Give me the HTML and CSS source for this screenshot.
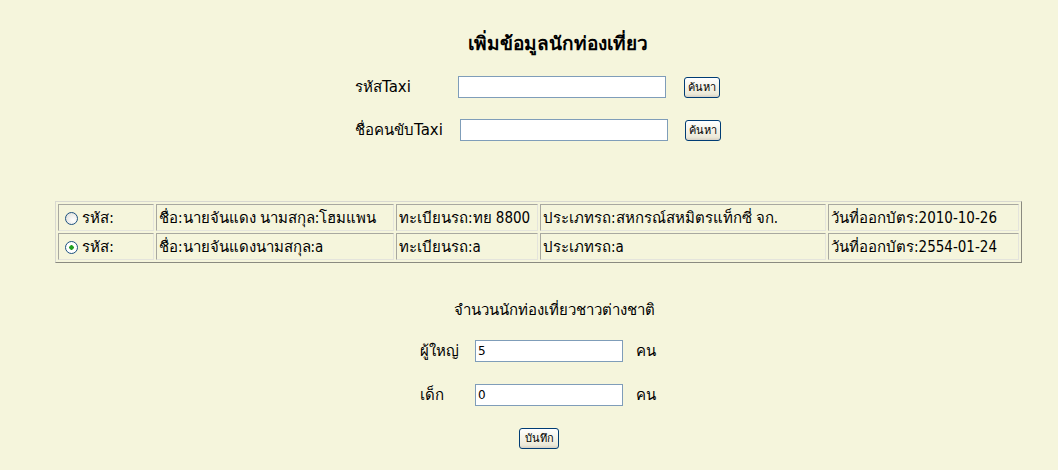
FILE: index.html
```html
<!DOCTYPE html>
<html lang="th">
<head>
<meta charset="utf-8">
<title>เพิ่มข้อมูลนักท่องเที่ยว</title>
<link rel="stylesheet" href="styles.css">
</head>
<body>
<div class="page">
  <h1 class="title">เพิ่มข้อมูลนักท่องเที่ยว</h1>
  <div class="search">
    <label class="lbl">รหัสTaxi</label>
    <input class="field" type="text">
    <button class="btn" type="button">ค้นหา</button>
    <label class="lbl">ชื่อคนขับTaxi</label>
    <input class="field field-2" type="text">
    <button class="btn btn-2" type="button">ค้นหา</button>
  </div>
  <table class="list">
    <colgroup>
      <col class="c1"><col class="c2"><col class="c3"><col class="c4"><col class="c5">
    </colgroup>
    <tr>
      <td><input class="radio" type="radio" name="taxi"> รหัส:</td>
      <td>ชื่อ:นายจันแดง นามสกุล:โฮมแพน</td>
      <td>ทะเบียนรถ:ทย 8800</td>
      <td>ประเภทรถ:สหกรณ์สหมิตรแท็กซี่ จก.</td>
      <td>วันที่ออกบัตร:2010-10-26</td>
    </tr>
    <tr>
      <td><input class="radio" type="radio" name="taxi" checked> รหัส:</td>
      <td>ชื่อ:นายจันแดงนามสกุล:a</td>
      <td>ทะเบียนรถ:a</td>
      <td>ประเภทรถ:a</td>
      <td>วันที่ออกบัตร:2554-01-24</td>
    </tr>
  </table>
  <p class="subtitle">จำนวนนักท่องเที่ยวชาวต่างชาติ</p>
  <div class="count">
    <label class="clbl">ผู้ใหญ่</label>
    <input class="cfield" type="text" value="5">
    <span class="unit">คน</span>
    <label class="clbl">เด็ก</label>
    <input class="cfield" type="text" value="0">
    <span class="unit">คน</span>
  </div>
  <div class="save-row">
    <button class="btn save" type="button">บันทึก</button>
  </div>
</div>
</body>
</html>
```

FILE: styles.css
```css
html, body {
  margin: 0;
  padding: 0;
  background: #f5f5dc;
}
body {
  font-family: Tahoma, "DejaVu Sans", "Noto Sans", sans-serif;
  color: #000;
}
.page {
  padding-top: 32px;
}
.title {
  margin: 0;
  font-size: 19px;
  font-weight: bold;
  line-height: 22px;
  text-align: center;
  padding-left: 58px;
}
.search {
  display: grid;
  grid-template-columns: 103px 226px auto;
  row-gap: 21px;
  align-items: center;
  padding-left: 355px;
  margin-top: 22px;
}
.lbl {
  font-size: 15px;
  line-height: 22px;
}
.field {
  width: 208px;
  height: 22px;
  box-sizing: border-box;
  border: 1px solid #7f9db9;
  background: #fff;
  margin: 0;
  padding: 0 3px;
}
.field-2 {
  margin-left: 2px;
}
.btn {
  height: 21px;
  box-sizing: border-box;
  padding: 0 3px;
  border: 1px solid #003c74;
  border-radius: 3px;
  background: linear-gradient(#ffffff, #ece9d8 85%, #d6d0c5);
  font-family: Tahoma, "DejaVu Sans", sans-serif;
  font-size: 11px;
  color: #000;
  justify-self: start;
  margin: 0;
}
.btn-2 {
  margin-left: 1px;
}
.list {
  margin: 60px 0 0 55px;
  width: 967px;
  border-collapse: separate;
  border-spacing: 2px;
  border: 1px solid;
  border-color: #d8d8d0 #8a8a80 #8a8a80 #d8d8d0;
  table-layout: fixed;
  font-family: "DejaVu Sans Condensed", "DejaVu Sans", sans-serif;
  font-size: 15px;
}
.c1 { width: 96px; }
.c2 { width: 238px; }
.c3 { width: 142px; }
.c4 { width: 286px; }
.list td {
  border: 1px solid;
  border-color: #a8a8a0 #e4e4dc #e4e4dc #a8a8a0;
  height: 25px;
  padding: 0 0 0 2px;
  white-space: nowrap;
  overflow: hidden;
}
.radio {
  appearance: none;
  -webkit-appearance: none;
  width: 13px;
  height: 13px;
  margin: 0 0 0 4px;
  border: 1px solid #1c5180;
  border-radius: 50%;
  background: radial-gradient(circle at 65% 65%, #ffffff, #dcdcd6);
  vertical-align: -2px;
  box-sizing: border-box;
}
.radio:checked {
  background: radial-gradient(circle, #21a121 0 2px, #ffffff 2.5px 100%);
}
.subtitle {
  margin: 37px 0 0;
  font-size: 15px;
  line-height: 20px;
  text-align: center;
  padding-left: 50px;
}
.count {
  display: grid;
  grid-template-columns: 55px 161px auto;
  row-gap: 22px;
  align-items: center;
  padding-left: 420px;
  margin-top: 20px;
}
.clbl, .unit {
  font-size: 15px;
  line-height: 21px;
}
.cfield {
  width: 148px;
  height: 22px;
  box-sizing: border-box;
  border: 1px solid #7f9db9;
  background: #fff;
  margin: 0;
  padding: 0 2px;
  font-family: Tahoma, "DejaVu Sans", sans-serif;
  font-size: 12px;
}
.save-row {
  padding-left: 519px;
  margin-top: 21px;
}
.save {
  width: 40px;
  padding: 0;
}
```
